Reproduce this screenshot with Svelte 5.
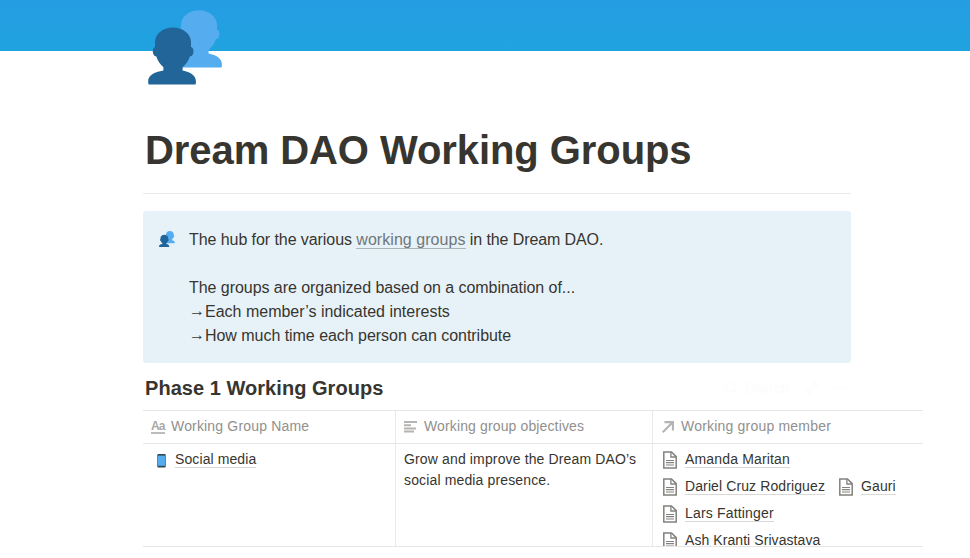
<script>
  const intro = [
    { text: 'Each member’s indicated interests', tracking: 0 },
    { text: 'How much time each person can contribute', tracking: -0.04 },
  ];
  const members = [
    [{ name: 'Amanda Maritan', tracking: 0.16 }],
    [{ name: 'Dariel Cruz Rodriguez', tracking: 0.11 }, { name: 'Gauri', tracking: 0.1 }],
    [{ name: 'Lars Fattinger', tracking: 0.17 }],
    [{ name: 'Ash Kranti Srivastava', tracking: 0.07 }],
  ];
</script>

{#snippet people(size)}
  <svg class="people" width={size} height={size} viewBox="0 0 75 75" aria-hidden="true">
    <defs>
      <path id="bust-{size}" d="M24.8 17.5C14.5 17.5 7 24.5 7 32V37C5 37.6 4.3 40.5 5.1 43.5C5.7 45.6 7.3 46.4 8.2 46.3C9.6 50.8 12.4 54.8 15.4 57.2V60.6C6 62 .2 66 .2 71C.2 73.2 .2 74.6 1 74.6H47.2C48 74.6 47.9 73.2 47.9 71C47.8 66 42.5 62 34.6 60.6V57.2C37.6 54.8 40.7 50.8 42 46.3C43 46.4 44.6 45.6 45.2 43.5C46 40.5 45.2 37.6 43 37V32C43 24.5 35.5 17.5 24.8 17.5Z" />
    </defs>
    <use href="#bust-{size}" transform="translate(26 -17.2)" fill="#55acee" />
    <use href="#bust-{size}" fill="#226699" />
  </svg>
{/snippet}

{#snippet pageIcon()}
  <svg class="doc" width="14" height="18" viewBox="0 0 14 18" fill="none" stroke="#82817e" aria-hidden="true">
    <path d="M.8 .9H8.5L13.2 5.6V17.1H.8Z" stroke-width="1.5" />
    <path d="M7.9 1V6H13" stroke-width="1.3" />
    <path d="M3 9.5H11M3 11.7H11M3 14H11" stroke-width="1.2" />
  </svg>
{/snippet}

<div class="page">
  <div class="cover"></div>
  <main>
    <div class="hero">{@render people(75)}</div>
    <h1>Dream DAO Working Groups</h1>
    <hr />
    <section class="callout">
      {@render people(16)}
      <div>
        <p class="lead"><span class="start">The hub for the various</span> <span class="link">working groups</span> in the Dream DAO.</p>
        <p class="gap">The groups are organized based on a combination of...</p>
        {#each intro as line}
          <p style:letter-spacing="{line.tracking}px"><span class="arrow">→</span>{line.text}</p>
        {/each}
      </div>
    </section>
    <div class="titlebar">
      <h2>Phase 1 Working Groups</h2>
      <div class="tools">
        <svg width="14" height="14" viewBox="0 0 14 14" fill="none" stroke="currentColor" stroke-width="1.5"><circle cx="6" cy="6" r="5" /><path d="M9.6 9.6L13 13" /></svg>
        <span>Search</span>
        <svg class="expand" width="12" height="12" viewBox="0 0 12 12" fill="none" stroke="currentColor" stroke-width="1.5"><path d="M7 1H11V5M11 1L7 5M5 11H1V7M1 11L5 7" /></svg>
        <svg class="dots" width="14" height="4" viewBox="0 0 14 4" fill="currentColor"><circle cx="2" cy="2" r="1.6" /><circle cx="7" cy="2" r="1.6" /><circle cx="12" cy="2" r="1.6" /></svg>
      </div>
    </div>
    <div class="table">
      <div class="row head">
        <div class="cell title"><span class="aa">Aa</span><span class="label">Working Group Name</span></div>
        <div class="cell goals">
          <svg class="lines" width="13" height="12" viewBox="0 0 13 12" fill="#b5b4b2"><path d="M0 0H13V2H0ZM0 3.2H7V5.2H0ZM0 6.4H12V8.4H0ZM0 9.6H10V11.6H0Z" /></svg>
          <span class="label">Working group objectives</span>
        </div>
        <div class="cell people-col">
          <svg class="rel" width="12" height="12" viewBox="0 0 12 12" fill="none" stroke="#b5b4b2" stroke-width="2.1"><path d="M2.5 1.1H10.9V9.5M10.9 1.1L.8 11.2" /></svg>
          <span class="label">Working group member</span>
        </div>
      </div>
      <div class="row body">
        <div class="cell">
          <div class="name">
            <svg class="phone" width="9" height="14" viewBox="0 0 9 14"><rect x=".3" width="8.4" height="13.6" rx="1" fill="#31474f" /><rect x=".9" y="1.6" width="7.2" height="10.2" fill="#55acee" /></svg>
            <span class="u">Social media</span>
          </div>
        </div>
        <div class="cell text">Grow and improve the Dream DAO’s social media presence.</div>
        <div class="cell">
          {#each members as line}
            <div class="members">
              {#each line as person}
                <span class="member">{@render pageIcon()}<span class="u" style:letter-spacing="{person.tracking}px">{person.name}</span></span>
              {/each}
            </div>
          {/each}
        </div>
      </div>
    </div>
  </main>
</div>

<style>
  :global(body) { margin: 0; background: #fff; overflow: hidden; }
  .page {
    height: 558px;
    overflow: hidden;
    color: #37352f;
    font-family: "Liberation Sans", Arial, sans-serif;
  }
  .cover { height: 51px; background: linear-gradient(#259de3, #1fa3df); }
  main { width: 708px; margin-left: 143px; }
  svg { display: block; flex: none; }
  .hero { position: relative; height: 35px; margin-top: -41px; padding: 0 0 40px 5px; }
  h1 { margin: 41px 0 0 2px; font-size: 40px; line-height: 48px; font-weight: 700; letter-spacing: -.07px; white-space: nowrap; }
  hr { margin: 19px 0 17px; border: 0; height: 1px; background: #ebebea; }
  .callout {
    display: flex;
    box-sizing: border-box;
    height: 152px;
    padding: 17px 16px;
    border-radius: 3px;
    background: #e7f2f8;
    font-size: 16px;
    line-height: 24px;
  }
  .callout .people { margin: 3px 14px 0 0; }
  p { margin: 0; }
  .lead { letter-spacing: -.1px; }
  .start { letter-spacing: -.07px; }
  .gap { margin-top: 24px; letter-spacing: -.05px; }
  .arrow { display: inline-block; width: 16px; height: 24px; line-height: 22px; vertical-align: top; }
  .link { color: #70777a; border-bottom: 1px solid #adb5b8; letter-spacing: .05px; }
  .titlebar { display: flex; justify-content: space-between; height: 47px; }
  h2 { margin: 12px 0 0 2px; font-size: 20px; line-height: 26px; letter-spacing: .04px; }
  .tools { display: flex; align-items: center; height: 28px; margin: 11px 4px 0 0; color: #fcfcfc; font-size: 14px; }
  .tools span { margin-left: 7px; }
  .expand { margin-left: 17px; }
  .dots { margin-left: 15px; }
  .table { width: 780px; font-size: 14px; }
  .row { display: grid; grid-template-columns: 253px 257px 270px; box-sizing: border-box; border-bottom: 1px solid #e6e6e5; }
  .head { height: 34px; border-top: 1px solid #e6e6e5; color: #91908d; }
  .body { height: 103px; overflow: hidden; letter-spacing: .14px; }
  .cell { box-sizing: border-box; padding: 0 8px; border-right: 1px solid #e9e9e8; min-width: 0; }
  .cell:last-child { border-right: 0; }
  .head .cell { display: flex; align-items: center; white-space: nowrap; }
  .title { letter-spacing: .17px; }
  .goals { letter-spacing: .13px; }
  .people-col { letter-spacing: .2px; }
  .label { padding-bottom: 2px; }
  .aa { width: 14px; height: 10px; margin-right: 6px; padding-top: 1px; border-bottom: 2px solid #bdbcba; color: #aaa9a6; font: 700 12px/9px "Liberation Sans", Arial, sans-serif; letter-spacing: -.8px; }
  .lines { margin-right: 7px; }
  .rel { margin: 0 7px 0 1px; }
  .text { padding-top: 5px; line-height: 21px; }
  .name { display: flex; align-items: center; height: 21px; padding: 5px 0 0 6px; letter-spacing: .1px; }
  .phone { margin: 2px 9px 0 0; }
  .u { line-height: 16px; border-bottom: 1px solid #d9d8d6; }
  .members { display: flex; height: 27px; padding-top: 7px; box-sizing: border-box; }
  .member { display: flex; height: 18px; margin-right: 12px; white-space: nowrap; }
  .doc { margin: 0 8px 0 2px; }
  .member .u { height: 16px; }
</style>
